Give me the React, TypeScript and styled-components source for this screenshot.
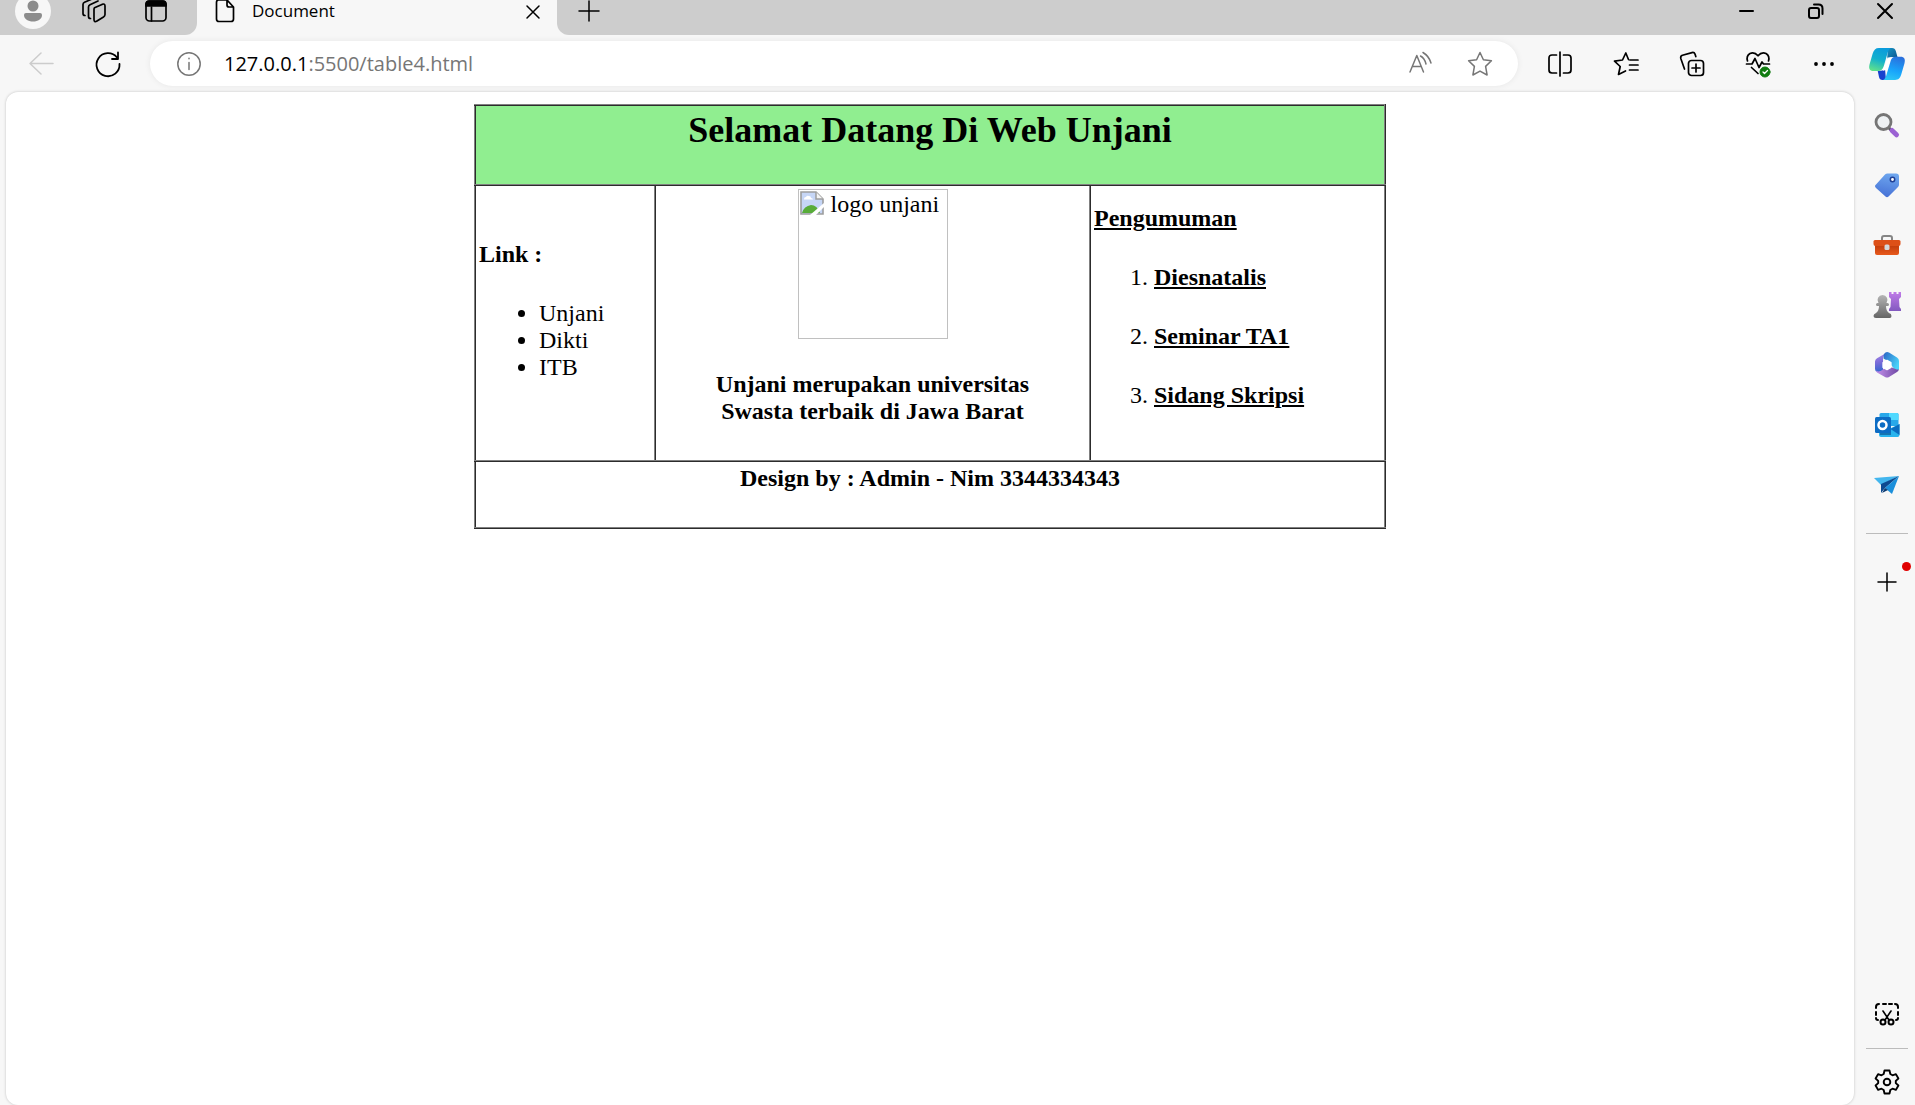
import React from "react";
import styled, { createGlobalStyle, css } from "styled-components";

const GlobalStyle = createGlobalStyle`
  * { box-sizing: border-box; }
  body { margin: 0; background: #f7f7f7; color: #000; }
`;

const Window = styled.div`
  display: flex;
  flex-direction: column;
  min-height: 100vh;
  font-family: "Open Sans", "Noto Sans", sans-serif;
`;

const TabBar = styled.header`
  display: flex;
  align-items: flex-start;
  height: 35px;
  background: #f7f7f7;
`;

const Strip = styled.div<{ $grow?: boolean }>`
  display: flex;
  align-items: flex-start;
  height: 35px;
  background: #cdcdcd;
  ${(p) =>
    p.$grow
      ? css`
          flex: 1;
          justify-content: space-between;
          padding-left: 16px;
          border-bottom-left-radius: 12px;
        `
      : css`
          width: 197px;
          padding-left: 15px;
          gap: 28px;
          border-bottom-right-radius: 12px;
        `}
`;

const IconButton = styled.button<{ $w?: number; $h?: number; $faded?: boolean }>`
  display: flex;
  align-items: center;
  justify-content: center;
  flex: none;
  width: ${(p) => p.$w ?? 32}px;
  height: ${(p) => p.$h ?? 32}px;
  padding: 0;
  border: 0;
  background: transparent;
  color: ${(p) => (p.$faded ? "#cccccc" : "inherit")};
  svg { display: block; flex: none; overflow: visible; }
`;

const Tab = styled.div`
  display: flex;
  align-items: flex-start;
  width: 360px;
  padding-left: 16px;
  font-size: 17px;
  line-height: 22px;
`;

const TabTitle = styled.span`
  flex: 1;
  padding-left: 15px;
`;

const WindowControls = styled.div`
  display: flex;
  gap: 37px;
  padding-right: 14px;
`;

const Toolbar = styled.nav`
  display: flex;
  align-items: center;
  height: 57px;
  padding: 0 10px 0 25px;
`;

const NavButtons = styled.div`
  display: flex;
  gap: 35px;
  width: 125px;
`;

const AddressBar = styled.div`
  display: flex;
  align-items: center;
  flex: 1;
  height: 45px;
  padding: 0 22px 0 23px;
  border-radius: 24px;
  background: #fff;
  box-shadow: 0 0 6px rgba(0, 0, 0, 0.07);
  color: #767676;
`;

const Address = styled.div`
  flex: 1;
  padding-left: 19px;
  font-size: 20px;
  line-height: 28px;
  b { font-weight: 400; color: #000; }
`;

const AddressTools = styled.div`
  display: flex;
  gap: 28px;
`;

const Tools = styled.div`
  display: flex;
  align-items: center;
  gap: 34px;
  padding: 0 29px 0 26px;
`;

const Body = styled.div`
  display: flex;
  flex: 1;
`;

const Page = styled.main`
  flex: 1;
  margin-left: 6px;
  padding: 12px;
  border-radius: 12px;
  background: #fff;
  box-shadow: 0 0 3px rgba(0, 0, 0, 0.22);
  font-family: "Liberation Serif", "Times New Roman", serif;
  font-size: 24px;
  line-height: 27px;
`;

const Sheet = styled.table`
  width: 912px;
  max-width: 100%;
  margin: 0 auto;
  table-layout: fixed;
  border-collapse: collapse;
  border: 2px outset gray;
`;

const Column = styled.col<{ $w: number }>`
  width: ${(p) => p.$w}px;
`;

const Cell = styled.td<{ $center?: boolean; $green?: boolean }>`
  padding: 3px;
  border: 2px inset gray;
  vertical-align: middle;
  text-align: ${(p) => (p.$center ? "center" : "left")};
  background: ${(p) => (p.$green ? "#90ee90" : "transparent")};
`;

const Title = styled.h2`
  margin: 0 0 30px;
  font-size: 36px;
  line-height: 42px;
`;

const Heading = styled.h4<{ $underline?: boolean }>`
  margin: 0 0 32px;
  font-size: 24px;
  text-decoration: ${(p) => (p.$underline ? "underline" : "none")};
`;

const Links = styled.ul`
  margin: 0 0 24px;
  padding-left: 60px;
`;

const News = styled.ol`
  margin: 0;
  padding-left: 60px;
`;

const MissingImage = styled.div`
  display: flex;
  align-items: flex-start;
  gap: 7px;
  width: 150px;
  height: 150px;
  margin: 0 auto 32px;
  padding: 1px;
  border: 1px solid #c0c0c0;
  white-space: nowrap;
`;

const SideBar = styled.aside`
  display: flex;
  flex-direction: column;
  align-items: center;
  width: 61px;
  padding: 17px 0 7px 4px;
`;

const Apps = styled.div`
  display: flex;
  flex-direction: column;
  gap: 28px;
`;

const Divider = styled.hr<{ $gap: number }>`
  width: 42px;
  margin: ${(p) => p.$gap}px 0 17px;
  border: 0;
  border-top: 1px solid #bcbcbc;
`;

const AddSlot = styled.div`
  position: relative;
  margin-top: 15px;
`;

const Dot = styled.span`
  position: absolute;
  top: -4px;
  right: -8px;
  width: 9px;
  height: 9px;
  border-radius: 50%;
  background: #e00000;
`;

const Spacer = styled.div`
  flex: 1;
`;

type IconProps = { size?: number; children: React.ReactNode; sw?: number };
const Line = ({ size = 24, sw = 1.5, children }: IconProps) => (
  <svg width={size} height={size} viewBox={`0 0 ${size} ${size}`} fill="none" stroke="currentColor" strokeWidth={sw} strokeLinecap="round" strokeLinejoin="round" aria-hidden="true">
    {children}
  </svg>
);

const Avatar = () => (
  <svg width="36" height="36" viewBox="0 0 36 36" aria-hidden="true">
    <circle cx="18" cy="18" r="18" fill="#f7f7f7" />
    <circle cx="18" cy="13" r="5.5" fill="#8c8c8c" />
    <path d="M9 22q0-2 2-2h14q2 0 2 2c0 4-4 6.500-9 6.500S9 26 9 22z" fill="#8c8c8c" />
  </svg>
);

const Copilot = () => (
  <svg width="36" height="32" viewBox="0 0 36 32" aria-hidden="true">
    <defs>
      <linearGradient id="cpA" x1=".6" y1="0" x2=".3" y2="1">
        <stop offset="0" stopColor="#0a9bdc" /><stop offset=".5" stopColor="#12b0cd" /><stop offset="1" stopColor="#5fe08c" />
      </linearGradient>
      <linearGradient id="cpB" x1=".7" y1="0" x2=".4" y2="1">
        <stop offset="0" stopColor="#2a6fdc" /><stop offset=".6" stopColor="#18a4fb" /><stop offset="1" stopColor="#2bc4f5" />
      </linearGradient>
      <linearGradient id="cpC" x1="0" y1="0" x2="1" y2="1">
        <stop offset="0" stopColor="#1696c6" /><stop offset="1" stopColor="#0c4f8a" />
      </linearGradient>
    </defs>
    <path d="M12 22l10-13.500L23 10l-5 13z" fill="#fff" />
    <path d="M19 0h4q3 0 3.800 3l1.700 6H23q-3.500 0-5 3z" fill="url(#cpC)" />
    <path d="M17 32h-3.500q-3 0-3.500-3l-1.300-6.200H12q3 0 4-2z" fill="#1741cf" />
    <path d="M10 0h12c-2 .8-3 3-3.700 6l-3.500 12c-1 3.500-2.800 5-5.800 5H4.500c-4 0-5-2.500-4-6.500L3.700 5.500C4.800 2 6.500 0 10 0z" fill="url(#cpA)" />
    <path d="M26 32H14c2-.8 3-3 3.700-6l3.800-12.500c1-3.500 2.500-4.700 5.500-4.700h4.500c4 0 5 2.500 4 6.500l-3.200 11C31.200 30 29.500 32 26 32z" fill="url(#cpB)" />
    <path d="M18.500 9.500h3.800q-1 1-1.500 2.800L18.200 20q-1.200 3-4.400 2.800.8-1 1.400-2.800z" fill="#fff" />
  </svg>
);

const SearchApp = () => (
  <svg width="26" height="26" viewBox="0 0 26 26" aria-hidden="true">
    <path d="M15 16l3 3" stroke="#555" strokeWidth="3" />
    <circle cx="9.500" cy="10" r="7.500" fill="#eef1f3" stroke="#757575" strokeWidth="2.800" />
    <path d="M18 18.500l4.500 4.300" stroke="#9b62d3" strokeWidth="5" strokeLinecap="round" />
  </svg>
);
const TagApp = () => (
  <svg width="26" height="26" viewBox="0 0 26 26" aria-hidden="true">
    <defs><linearGradient id="tag" x1=".6" y1="0" x2=".4" y2="1"><stop offset="0" stopColor="#6ea6ee" /><stop offset="1" stopColor="#4671d6" /></linearGradient></defs>
    <path d="M13.500 1.500H22q3 0 3 3v8q0 1.500-1 2.500l-9.500 9.500q-1.500 1.500-3 0L2 16q-2-2 0-3.500l9-10q1-1 2.500-1z" fill="url(#tag)" />
    <circle cx="18.500" cy="7.500" r="2.200" fill="#fff" stroke="#1f3f94" strokeWidth="1.500" />
  </svg>
);
const ToolsApp = () => (
  <svg width="28" height="22" viewBox="0 0 28 22" aria-hidden="true">
    <defs><linearGradient id="box" x1="0" y1="0" x2="0" y2="1"><stop offset="0" stopColor="#c03c0c" /><stop offset="1" stopColor="#e8591b" /></linearGradient></defs>
    <path d="M9 7V4q0-2 2-2h6q2 0 2 2v3" fill="none" stroke="#858585" strokeWidth="2" />
    <path d="M2 11h24v8q0 2-2 2H4q-2 0-2-2z" fill="url(#box)" />
    <path d="M2 6h24q1.500 0 1.500 1.500V10q0 2-2 2h-23q-2 0-2-2V7.500Q.5 6 2 6z" fill="#dd5018" />
    <rect x="11.500" y="10.500" width="5" height="5.500" rx="1.500" fill="#d4d8da" />
  </svg>
);
const GamesApp = () => (
  <svg width="28" height="28" viewBox="0 0 28 28" aria-hidden="true">
    <defs>
      <linearGradient id="rook" x1="0" y1="0" x2="0" y2="1"><stop offset="0" stopColor="#c07be8" /><stop offset="1" stopColor="#8259bf" /></linearGradient>
      <linearGradient id="pawn" x1="0" y1="0" x2="0" y2="1"><stop offset="0" stopColor="#b5b5b5" /><stop offset="1" stopColor="#656565" /></linearGradient>
    </defs>
    <path d="M16 1h2.500v2h2V1h3v2h2V1H28v5l-2 2 .5 8 1.500 2v2H16v-2l1.500-2 .5-8-2-2z" fill="url(#rook)" />
    <path d="M9.500 4a5 5 0 0 1 4 8h1q1.500 0 1.500 1.500T14.500 15H13q0 5 3 7 2.500.5 2.500 3T16 27H3q-2.500 0-2.500-2T3 22q3-2 3-7H4.500Q3 15 3 13.500T4.500 12h1a5 5 0 0 1 4-8z" fill="url(#pawn)" />
  </svg>
);
const M365App = () => (
  <svg width="26" height="28" viewBox="0 0 26 28" aria-hidden="true">
    <defs>
      <linearGradient id="mA" x1=".4" y1="0" x2=".5" y2="1"><stop offset="0" stopColor="#a98ae8" /><stop offset=".5" stopColor="#7a6bd8" /><stop offset="1" stopColor="#2f66ce" /></linearGradient>
      <linearGradient id="mB" x1="0" y1="0" x2="1" y2=".6"><stop offset="0" stopColor="#2a63c4" /><stop offset="1" stopColor="#49d3fa" /></linearGradient>
      <linearGradient id="mC" x1="0" y1="0" x2="1" y2="0"><stop offset="0" stopColor="#c490ea" /><stop offset="1" stopColor="#6e48a4" /></linearGradient>
    </defs>
    <path d="M14 1L3 7.200Q1 8.500 1 10.500v7.500q0 2.500 2.500 3.200L9 20V6q2-4 5-5z" fill="url(#mA)" />
    <path d="M9.500 7.500Q9 3 11.500 1.500q1.500-1 3.500 0L23 6.500q2 1.200 2 3.500v8.500q-1.500 1.500-4.500-.5L17 14q0-3.500-4-4.500z" fill="url(#mB)" />
    <path d="M2 19.500q2.500 1.800 5 .3l4-2.800 6-1 4.500 2q2 .8 3.400.5-.4 1.500-1.900 2.500l-8 5q-2 1.200-4 0l-8-4.500q-.8-.8-1-2z" fill="url(#mC)" />
    <path d="M13 9.500l3.900 2.200v4.600L13 18.500l-3.900-2.200v-4.600z" fill="#fff" stroke="#fff" strokeWidth="1.500" strokeLinejoin="round" />
  </svg>
);
const OutlookApp = () => (
  <svg width="26" height="26" viewBox="0 0 26 26" aria-hidden="true">
    <path d="M7 1h16q1.500 0 1.500 1.500V14H5.500V2.500Q5.500 1 7 1z" fill="#28a8ea" />
    <path d="M15 1h8q1.500 0 1.500 1.500V8H15z" fill="#50d9ff" />
    <path d="M5 12l10 5 10.500-5v11q0 2-2 2H7q-2 0-2-2z" fill="#28b4ee" />
    <path d="M25.500 12v11l-9-6z" fill="#0a6cc0" />
    <path d="M6 8h11v15H6z" fill="#0a4a88" opacity=".6" />
    <rect x="1" y="5" width="16" height="16" rx="1.500" fill="#0c6cc4" />
    <circle cx="8.500" cy="13" r="4" fill="none" stroke="#fff" strokeWidth="2.500" />
  </svg>
);
const DropApp = () => (
  <svg width="28" height="26" viewBox="0 0 28 26" aria-hidden="true">
    <path d="M1 6l25-2-18 9z" fill="#43b6ee" />
    <path d="M8 12l18-8-14 12-4 5z" fill="#0d4a91" />
    <path d="M26 4l-7 18-7-6z" fill="#1b8fdb" />
    <path d="M12 16l3 2-6 3z" fill="#0c3a70" />
  </svg>
);
const BrokenIcon = () => (
  <svg width="24" height="24" viewBox="0 0 24 24" aria-hidden="true">
    <path d="M1 1h15l7 7v15H1z" fill="#c6d6f6" stroke="#9d9d9d" strokeWidth="1.600" />
    <path d="M4 8q0-2 2-2 1-2 3-1 2 0 2 2 2 0 2 1.500H4z" fill="#fff" />
    <path d="M2 22q2-7 9-8 6 0 9 8z" fill="#58ac39" />
    <path d="M16 1v7h7" fill="#f4f4f4" stroke="#9d9d9d" strokeWidth="1.500" />
    <path d="M10 24L24 12v4l-8 8z" fill="#fff" />
  </svg>
);

const apps: [string, () => React.JSX.Element][] = [
  ["Search", SearchApp],
  ["Shopping", TagApp],
  ["Tools", ToolsApp],
  ["Games", GamesApp],
  ["Microsoft 365", M365App],
  ["Outlook", OutlookApp],
  ["Drop", DropApp],
];

export default function App() {
  return (
    <Window>
      <GlobalStyle />
      <TabBar>
        <Strip>
          <IconButton $w={36} $h={22} aria-label="Profile"><Avatar /></IconButton>
          <IconButton $w={30} $h={22} aria-label="Workspaces">
            <Line size={26} sw={1.7}>
              <path d="M13.500 9.800l7.500-3.400q3-1.200 3 1.500v8.600q0 1.500-1.500 2.500l-6.500 4q-3 1.800-3-1.500V11.500q0-1 .5-1.700z" />
              <path d="M9.500 20.500q-2 0-2-2V9q0-1.500 1.500-2.300L17 3" />
              <path d="M4 17.500q-2 0-2-2V6.500Q2 5 3.500 4.300L11 1" />
            </Line>
          </IconButton>
          <IconButton $w={38} $h={22} aria-label="Tab actions">
            <Line size={24} sw={1.7}>
              <rect x="2" y="2" width="20" height="20" rx="3.500" />
              <path d="M2 7V5q0-3 3-3h14q3 0 3 3v2z" fill="currentColor" />
              <path d="M7.500 8v14" />
            </Line>
          </IconButton>
        </Strip>
        <Tab>
          <IconButton $w={24} $h={22} aria-label="Page">
            <Line size={24} sw={1.7}>
              <path d="M5.500 1H14l6.500 7v12q0 2.500-2.500 2.500H6q-2.500 0-2.500-2.500V3.500Q3.500 1 5.500 1zM14 1v5q0 2 2 2h4.500" />
            </Line>
          </IconButton>
          <TabTitle>Document</TabTitle>
          <IconButton $w={48} $h={24} aria-label="Close tab"><Line size={12}><path d="M0 0l12 12M12 0L0 12" /></Line></IconButton>
        </Tab>
        <Strip $grow>
          <IconButton $h={21} aria-label="New tab"><Line size={20}><path d="M0 10h20M10 0v20" /></Line></IconButton>
          <WindowControls>
            <IconButton $h={21} aria-label="Minimize"><Line size={16} sw={2}><path d="M1 8h13" /></Line></IconButton>
            <IconButton $h={21} aria-label="Restore">
              <Line size={16} sw={2}><rect x="1" y="5" width="10" height="10" rx="2" /><path d="M6 1.500h4.500q4 0 4 4V11" /></Line>
            </IconButton>
            <IconButton $h={21} aria-label="Close"><Line size={16} sw={2}><path d="M1 1l14 14M15 1L1 15" /></Line></IconButton>
          </WindowControls>
        </Strip>
      </TabBar>
      <Toolbar>
        <NavButtons>
          <IconButton $faded aria-label="Back"><Line><path d="M24 11.500H1M12 1L1 11.500 12 22" /></Line></IconButton>
          <IconButton aria-label="Reload"><Line sw={1.8}><path d="M23.500 12A11.500 11.500 0 1 1 21 5.500M22 .5v6.500h-6" /></Line></IconButton>
        </NavButtons>
        <AddressBar>
          <IconButton aria-label="Site information">
            <Line><circle cx="12" cy="12" r="11.200" /><path d="M12 10.500v7M12 6.300v.4" /></Line>
          </IconButton>
          <Address><b>127.0.0.1</b>:5500/table4.html</Address>
          <AddressTools>
            <IconButton aria-label="Read aloud">
              <Line><path d="M2 20L8.800 3.500 15.500 20M4.500 14.500H13M12.500 4q4 2 5.500 8M15 .5q6 3.500 8 10.500" /></Line>
            </IconButton>
            <IconButton aria-label="Add to favorites">
              <Line><path d="M12 .5l3.400 7.200 8 1.100-5.800 5.600 1.500 8.600-7.100-3.900L4.900 23l1.500-8.600L.6 8.800l8-1.100z" /></Line>
            </IconButton>
          </AddressTools>
        </AddressBar>
        <Tools>
          <IconButton aria-label="Split screen">
            <Line sw={1.7}><path d="M8.500 3H4Q1 3 1 6v12q0 3 3 3h4.500M15.500 3H20q3 0 3 3v12q0 3-3 3h-4.500M12 0v24" /></Line>
          </IconButton>
          <IconButton aria-label="Favorites">
            <Line sw={1.7}><path d="M14.500 7.500L11.800 1 8.500 8l-8 1.200 5.700 5.300L4.500 22.500l7-3.500M16 8h8M15.500 13H24M15.500 18H24" /></Line>
          </IconButton>
          <IconButton aria-label="Collections">
            <Line sw={1.7}><rect x="8.500" y="8.500" width="15" height="15" rx="3" /><path d="M16 12v8M12 16h8M4.500 17L.8 6.500Q.2 4 2.500 3.300L12 .6q2.200-.6 3 1.500l.8 2.500" /></Line>
          </IconButton>
          <IconButton aria-label="Browser essentials">
            <Line sw={1.7}>
              <path d="M1.500 9Q0 4 4 1.500q4.500-1.800 8 2.300 3.500-4.100 8-2.300Q24 4 22.500 9M.5 12h5.500l3-5.500 4 9 3-5.500 1.500 2h6M5.500 15.500l6.500 6" />
              <circle cx="19" cy="20" r="5" fill="#107c10" stroke="#107c10" strokeWidth="1" /><path d="M17 20l1.500 1.500 3-3" stroke="#fff" strokeWidth="1.300" />
            </Line>
          </IconButton>
          <IconButton aria-label="Settings and more">
            <Line><g fill="currentColor" stroke="none"><circle cx="4" cy="12" r="1.900" /><circle cx="12" cy="12" r="1.900" /><circle cx="20" cy="12" r="1.900" /></g></Line>
          </IconButton>
        </Tools>
        <IconButton $w={36} $h={36} aria-label="Copilot"><Copilot /></IconButton>
      </Toolbar>
      <Body>
        <Page>
          <Sheet>
            <colgroup><Column $w={180} /><Column $w={435} /><col /></colgroup>
            <tbody>
              <tr><Cell colSpan={3} $center $green><Title>Selamat Datang Di Web Unjani</Title></Cell></tr>
              <tr>
                <Cell>
                  <Heading>Link :</Heading>
                  <Links><li>Unjani</li><li>Dikti</li><li>ITB</li></Links>
                </Cell>
                <Cell $center>
                  <MissingImage><BrokenIcon /><span>logo unjani</span></MissingImage>
                  <Heading>Unjani merupakan universitas<br />Swasta terbaik di Jawa Barat</Heading>
                </Cell>
                <Cell>
                  <Heading $underline>Pengumuman</Heading>
                  <News>
                    <li><Heading $underline>Diesnatalis</Heading></li>
                    <li><Heading $underline>Seminar TA1</Heading></li>
                    <li><Heading $underline>Sidang Skripsi</Heading></li>
                  </News>
                </Cell>
              </tr>
              <tr><Cell colSpan={3} $center><Heading>Design by : Admin - Nim 3344334343</Heading></Cell></tr>
            </tbody>
          </Sheet>
        </Page>
        <SideBar>
          <Apps>
            {apps.map(([name, Icon]) => (
              <IconButton key={name} aria-label={name}><Icon /></IconButton>
            ))}
          </Apps>
          <Divider $gap={32} />
          <AddSlot>
            <IconButton aria-label="Customize"><Line size={18}><path d="M0 9h18M9 0v18" /></Line></IconButton>
            <Dot />
          </AddSlot>
          <Spacer />
          <IconButton aria-label="Screenshot">
            <Line size={24} sw={2}>
              <path d="M1 5V4q0-3 3-3M8 1h3M14 1h3M20 1q3 0 3 3v1M1 9v3M23 9v3M1 15q0 2 2 2M23 15q0 2-2 2" />
              <path d="M8 8l6 9M16 8l-6 9" strokeWidth="1.600" /><circle cx="8" cy="19" r="2.500" /><circle cx="16" cy="19" r="2.500" />
            </Line>
          </IconButton>
          <Divider $gap={17} />
          <IconButton aria-label="Settings">
            <Line size={26} sw={1.9}>
              <path d="M10.500 1.500h5l.8 3.500 2.200 1.300 3.400-1.200 2.500 4.400-2.600 2.400v2.200l2.600 2.400-2.500 4.400-3.400-1.200-2.200 1.300-.8 3.500h-5L9.700 21l-2.200-1.300-3.400 1.200-2.500-4.400 2.600-2.400v-2.200L1.600 9.500l2.500-4.400 3.400 1.200L9.700 5z" />
              <circle cx="13" cy="13" r="3.300" />
            </Line>
          </IconButton>
        </SideBar>
      </Body>
    </Window>
  );
}
